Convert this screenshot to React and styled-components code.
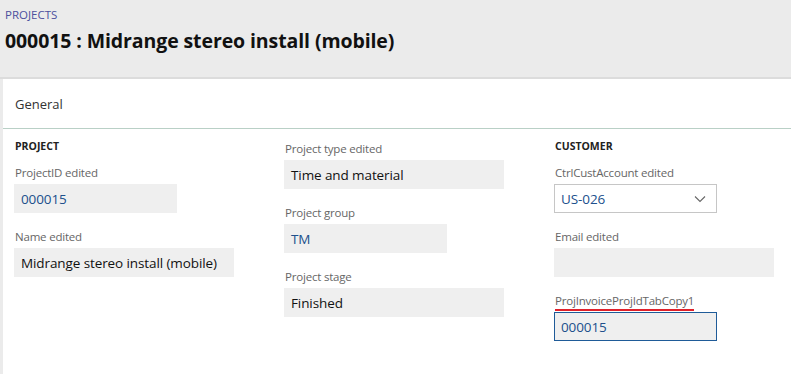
import React from "react"
import styled, { createGlobalStyle } from "styled-components"

const GlobalStyle = createGlobalStyle`
  body {
    margin: 0;
    background: #ebebeb;
    font-family: "Open Sans", "Noto Sans", sans-serif;
    color: #222;
  }
`

const Page = styled.div`
  width: 791px;
  height: 374px;
  overflow: hidden;
  background: #ebebeb;
`

const Header = styled.header`
  height: 79px;
  padding: 7px 0 0 5px;
  box-sizing: border-box;
  border-bottom: 2px solid #dcdcdc;
`

const Breadcrumb = styled.div`
  font-size: 11.5px;
  line-height: 16px;
  color: #4b4f9e;
`

const Title = styled.h1`
  margin: 5px 0 0;
  font-size: 19.5px;
  line-height: 26px;
  font-weight: 700;
  color: #111;
  letter-spacing: -0.1px;
`

const Card = styled.section`
  margin-left: 3px;
  background: #fff;
  height: 295px;
`

const CardHeader = styled.div`
  height: 49px;
  display: flex;
  align-items: center;
  padding-left: 12px;
  font-size: 13px;
  color: #333;
  border-bottom: 1px solid #b9d0c6;
`

const Body = styled.div`
  display: grid;
  grid-template-columns: 270px 270px 240px;
  padding: 12px 0 0 11px;
`

const Column = styled.div`
  display: flex;
  flex-direction: column;
`

const GroupTitle = styled.div`
  font-size: 10.5px;
  font-weight: 700;
  line-height: 16px;
  color: #222;
  margin: -3px 0 11px 1px;
`

const Field = styled.div`
  display: flex;
  flex-direction: column;
  margin-bottom: 16px;
`

const Label = styled.label`
  font-size: 11.5px;
  line-height: 16px;
  color: #666;
  margin: 0 0 3px 1px;
  letter-spacing: -0.2px;
`

const Squiggle = styled.span`
  border-bottom: 2px solid #e0202a;
  padding-bottom: 1px;
`

const Input = styled.div`
  box-sizing: border-box;
  width: ${({ $wide }) => ($wide ? "220px" : "163px")};
  height: 29px;
  padding: 0 6px;
  display: flex;
  align-items: center;
  justify-content: space-between;
  background: ${({ $select }) => ($select ? "#fff" : "#efefef")};
  border: 1px solid
    ${({ $select, $focus }) =>
      $focus ? "#1f5b98" : $select ? "#c6c6c6" : "transparent"};
  font-size: 13.5px;
  color: ${({ $link }) => ($link ? "#20508c" : "#111")};
  letter-spacing: -0.1px;
`

const Chevron = () => (
  <svg width="12" height="8" viewBox="0 0 12 8" style={{ marginRight: 4 }}>
    <path d="M1 1.5 L6 6.5 L11 1.5" fill="none" stroke="#666" strokeWidth="1.1" />
  </svg>
)

export default function App() {
  return (
    <Page>
      <GlobalStyle />
      <Header>
        <Breadcrumb>PROJECTS</Breadcrumb>
        <Title>000015 : Midrange stereo install (mobile)</Title>
      </Header>
      <Card>
        <CardHeader>General</CardHeader>
        <Body>
          <Column>
            <GroupTitle>PROJECT</GroupTitle>
            <Field>
              <Label>ProjectID edited</Label>
              <Input $link>000015</Input>
            </Field>
            <Field>
              <Label>Name edited</Label>
              <Input $wide>Midrange stereo install (mobile)</Input>
            </Field>
          </Column>
          <Column>
            <Field>
              <Label>Project type edited</Label>
              <Input $wide>Time and material</Input>
            </Field>
            <Field>
              <Label>Project group</Label>
              <Input $link>TM</Input>
            </Field>
            <Field>
              <Label>Project stage</Label>
              <Input $wide>Finished</Input>
            </Field>
          </Column>
          <Column>
            <GroupTitle>CUSTOMER</GroupTitle>
            <Field>
              <Label>CtrlCustAccount edited</Label>
              <Input $select $link>
                US-026
                <Chevron />
              </Input>
            </Field>
            <Field>
              <Label>Email edited</Label>
              <Input $wide />
            </Field>
            <Field>
              <Label>
                <Squiggle>ProjInvoiceProjIdTabCopy1</Squiggle>
              </Label>
              <Input $focus $link>000015</Input>
            </Field>
          </Column>
        </Body>
      </Card>
    </Page>
  )
}
